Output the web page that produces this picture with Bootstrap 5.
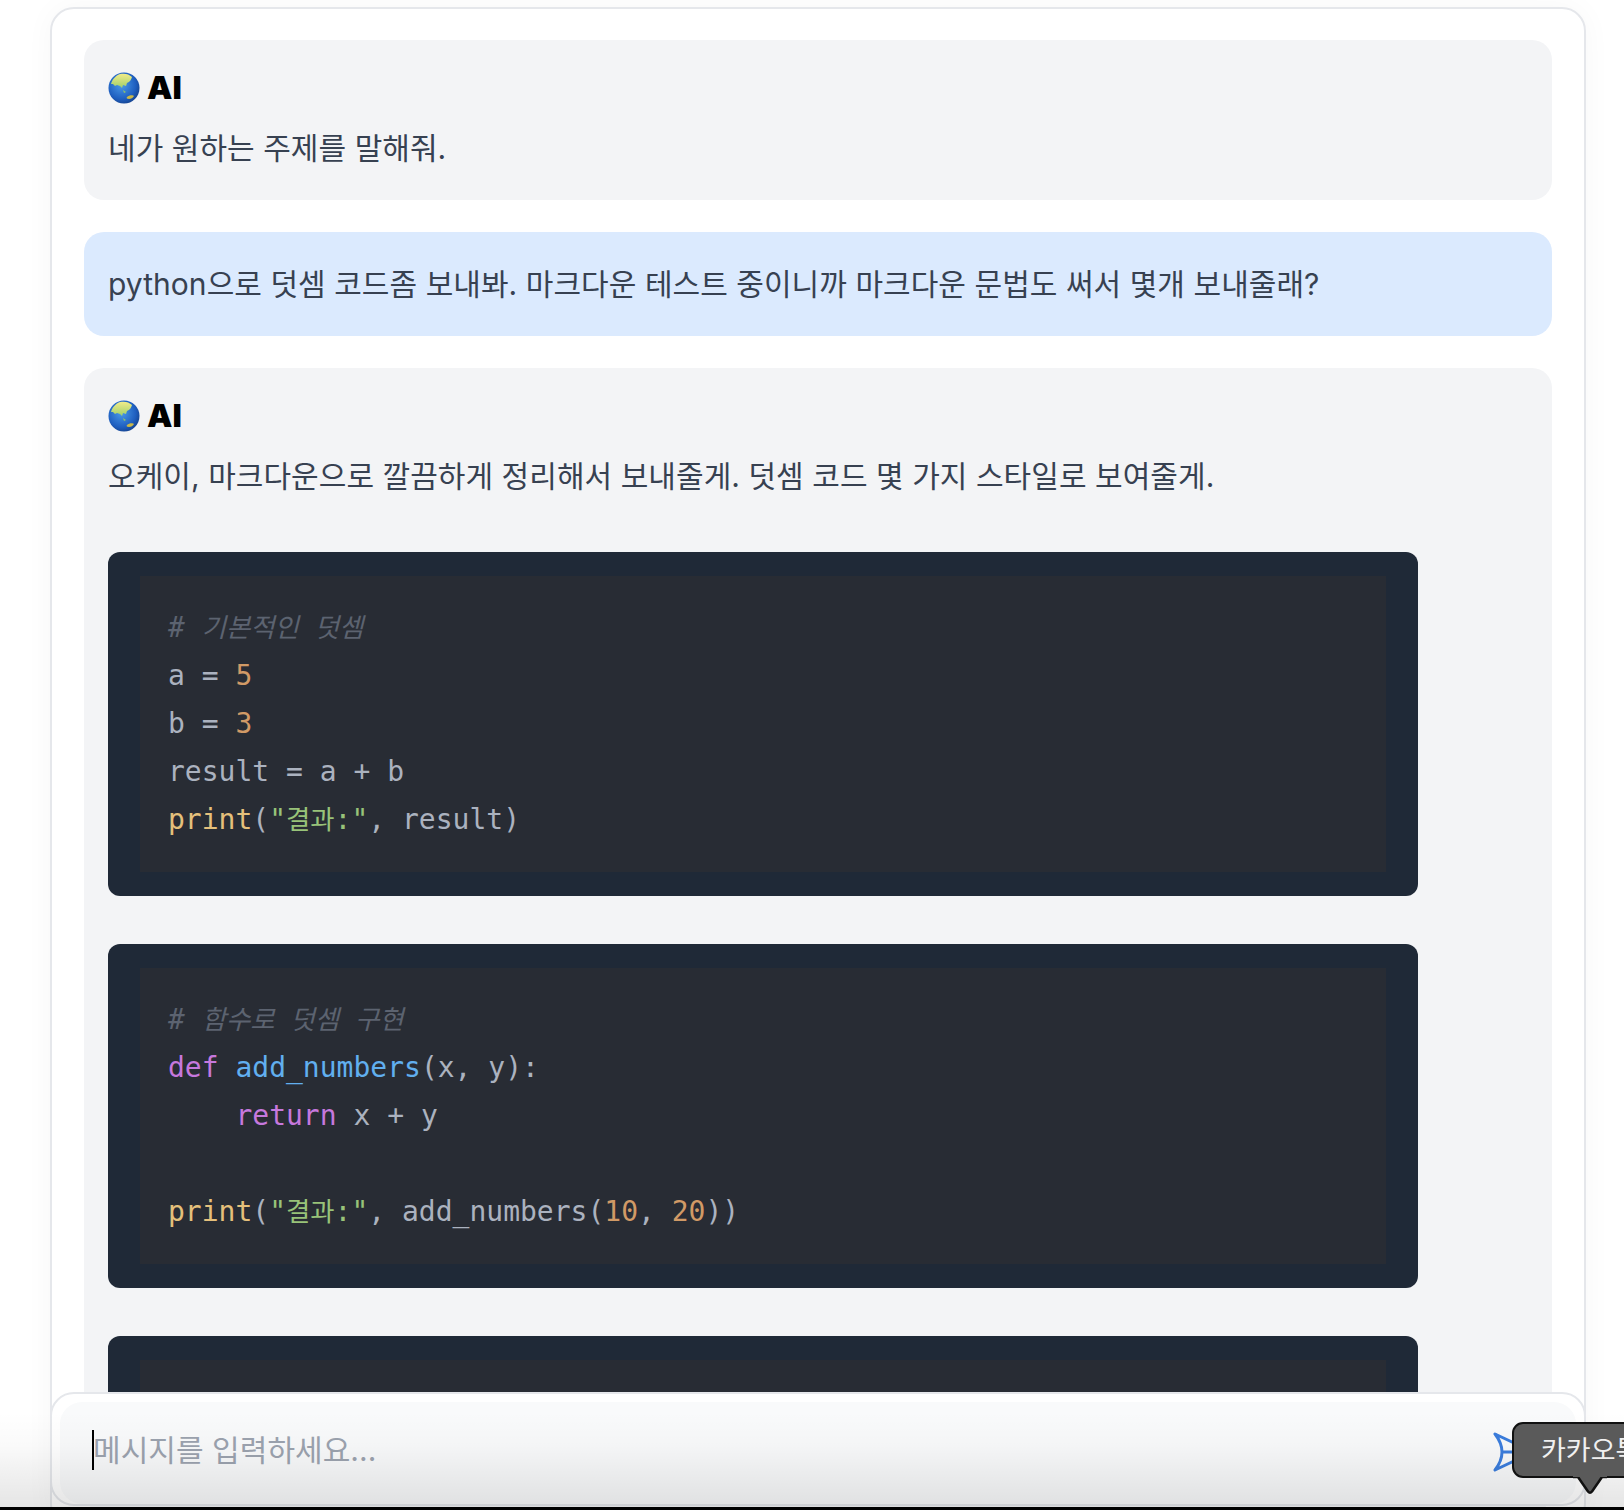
<!DOCTYPE html>
<html lang="ko">
<head>
<meta charset="utf-8">
<title>Chat</title>
<link rel="stylesheet" href="https://cdn.jsdelivr.net/npm/bootstrap@5.3.0/dist/css/bootstrap.min.css">
<style>
html, body { height: 100%; background: #000; overflow: hidden; }
body { font-family: "Inter", "Noto Sans CJK KR", sans-serif; color: #374151; }
.stage { height: 1507px; background: #fff; overflow: hidden; padding: 7px 38px 0 50px; position: relative; }
.chat-shell { border: 2px solid #e5e7eb; border-radius: 24px; background: #fff; padding: 31px 32px 0; height: 1520px; box-shadow: 0 0 30px rgba(0,0,0,.035); gap: 32px; }
.bubble { border-radius: 20px; padding: 24px; font-size: 30px; line-height: 56px; letter-spacing: .05px; flex: none; }
.bubble-ai { background: #f3f4f6; }
.bubble-user { background: #dbeafe; }
.who { height: 48px; margin-bottom: 8px; color: #000; font-weight: 900; font-size: 32px; line-height: 48px; letter-spacing: 0; gap: 7px; }
.codewrap { background: #1f2937; border-radius: 12px; padding: 24px 32px; margin-top: 48px; width: 1310px; }
.codewrap pre { background: #282c34; margin: 0; padding: 28px; font: 28px/48px "DejaVu Sans Mono", "Noto Sans CJK KR", monospace; color: #abb2bf; letter-spacing: 0; overflow: hidden; }
.c { color: #5c6370; font-style: italic; }
.n { color: #d19a66; }
.s { color: #98c379; }
.k { color: #c678dd; }
.b { color: #e5c07b; }
.f { color: #61afef; }
.kr { font-size: 26.4px; }
.composer { position: absolute; left: 50px; top: 1392px; width: 1536px; height: 114px; background: #fff; border: 2px solid #e5e7eb; border-radius: 24px; padding: 8px 8px 0 8px; }
.composer-in { height: 102px; border-radius: 22px; background: #f9fafb; padding: 0 0 6px 32px; color: #9ca3af; font-size: 30px; letter-spacing: .05px; }
.caret-bar { width: 2px; height: 40px; background: #000; margin-right: -1px; flex: none; }
.send-ico { position: absolute; left: 1441px; top: 37px; }
.fade-foot { position: absolute; left: 0; right: 0; bottom: 0; height: 95px; background: linear-gradient(rgba(0,0,0,0), rgba(0,0,0,.02) 35%, rgba(0,0,0,.1)); pointer-events: none; }
.tip { position: absolute; left: 1512px; top: 1422px; width: 180px; height: 56px; background: #5a5a5a; border: 2px solid #111; border-radius: 11px; color: #f0f0f0; font-size: 27px; line-height: 54px; padding-left: 27px; white-space: nowrap; }
.tip-tail { position: absolute; left: 1572px; top: 1475px; }
</style>
</head>
<body>
<div class="stage">
  <div class="chat-shell d-flex flex-column">
    <div class="bubble bubble-ai">
      <div class="who d-flex align-items-center">
        <svg width="32" height="32" viewBox="0 0 32 32" aria-hidden="true"><defs><radialGradient id="g1" cx=".42" cy=".4" r=".7"><stop offset="0" stop-color="#4a9ae8"/><stop offset=".65" stop-color="#1f5fc0"/><stop offset="1" stop-color="#123a80"/></radialGradient><linearGradient id="g2" x1="0" y1="0" x2="0" y2="1"><stop offset="0" stop-color="#f2ec8a"/><stop offset="1" stop-color="#9fcf6a"/></linearGradient></defs><circle cx="16" cy="16" r="15.5" fill="url(#g1)"/><path d="M3 12c1-4 4-8 9-10 5-1 9 0 12 3-1 3-2 5-5 6l-1 3-3-1-1 3-2-2-3-1-2 1-2-2z" fill="url(#g2)"/><path d="M19 25c2-2 6-2 7-1-1 2-3 3-5 3-2 0-3-1-2-2z" fill="#c9b84a"/><path d="M15 18l3 2-2 1z" fill="#8fc46a"/></svg>
        <span>AI</span>
      </div>
      <div>네가 원하는 주제를 말해줘.</div>
    </div>
    <div class="bubble bubble-user">python으로 덧셈 코드좀 보내봐. 마크다운 테스트 중이니까 마크다운 문법도 써서 몇개 보내줄래?</div>
    <div class="bubble bubble-ai">
      <div class="who d-flex align-items-center">
        <svg width="32" height="32" viewBox="0 0 32 32" aria-hidden="true"><circle cx="16" cy="16" r="15.5" fill="url(#g1)"/><path d="M3 12c1-4 4-8 9-10 5-1 9 0 12 3-1 3-2 5-5 6l-1 3-3-1-1 3-2-2-3-1-2 1-2-2z" fill="url(#g2)"/><path d="M19 25c2-2 6-2 7-1-1 2-3 3-5 3-2 0-3-1-2-2z" fill="#c9b84a"/><path d="M15 18l3 2-2 1z" fill="#8fc46a"/></svg>
        <span>AI</span>
      </div>
      <div>오케이, 마크다운으로 깔끔하게 정리해서 보내줄게. 덧셈 코드 몇 가지 스타일로 보여줄게.</div>
      <div class="codewrap"><pre><span class="c"># <span class="kr">기본적인 덧셈</span></span>
a = <span class="n">5</span>
b = <span class="n">3</span>
result = a + b
<span class="b">print</span>(<span class="s">"<span class="kr">결과</span>:"</span>, result)</pre></div>
      <div class="codewrap"><pre><span class="c"># <span class="kr">함수로 덧셈 구현</span></span>
<span class="k">def</span> <span class="f">add_numbers</span>(x, y):
    <span class="k">return</span> x + y

<span class="b">print</span>(<span class="s">"<span class="kr">결과</span>:"</span>, add_numbers(<span class="n">10</span>, <span class="n">20</span>))</pre></div>
      <div class="codewrap"><pre>

</pre></div>
    </div>
  </div>
  <div class="composer">
    <div class="composer-in d-flex align-items-center">
      <span class="caret-bar"></span><span>메시지를 입력하세요...</span>
    </div>
    <svg class="send-ico" width="42" height="42" viewBox="0 0 42 42" fill="none" aria-hidden="true"><path d="M2 3 L40 21 L2 39 Q9 30 9 21 Q9 12 2 3 Z M9 21 H24" stroke="#3b7ddd" stroke-width="3" stroke-linejoin="round"/></svg>
  </div>
  <div class="fade-foot"></div>
  <div class="tip">카카오톡 공유</div>
  <svg class="tip-tail" width="36" height="20" viewBox="0 0 36 20" aria-hidden="true"><path d="M1 2 H6 L16 16.5 Q18 19 20 16.5 L30 2 H35" fill="#5a5a5a" stroke="#111" stroke-width="2.5" stroke-linejoin="round"/><path d="M1 0 H35 V2 H1 Z" fill="#5a5a5a"/></svg>
</div>
<script src="https://cdn.jsdelivr.net/npm/bootstrap@5.3.0/dist/js/bootstrap.bundle.min.js"></script>
</body>
</html>
